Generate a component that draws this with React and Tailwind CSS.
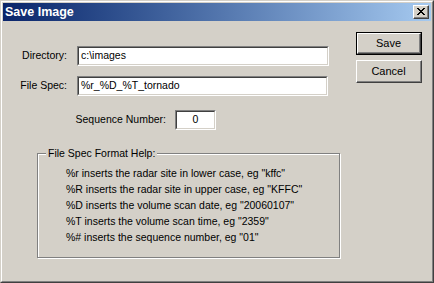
function Sunken({ className, children }) {
  return (
    <div className={'border-t border-l border-[#808080] border-r border-b border-r-white border-b-white ' + className}>
      <div className="h-full border-t border-l border-[#404040] border-r border-b border-r-[#d4d0c8] border-b-[#d4d0c8] bg-white flex items-center">
        {children}
      </div>
    </div>
  )
}

function Button({ label, isDefault }) {
  const btn = (
    <div className="h-full border-t border-l border-white border-r border-b border-r-[#404040] border-b-[#404040]">
      <div className="h-full border-r border-b border-[#808080] flex items-center justify-center text-[11px]">
        {label}
      </div>
    </div>
  )
  if (isDefault) {
    return <div className="w-[66px] h-[23px] border border-black">{btn}</div>
  }
  return <div className="w-[66px] h-[23px]">{btn}</div>
}

const help = [
  '%r inserts the radar site in lower case, eg "kffc"',
  '%R inserts the radar site in upper case, eg "KFFC"',
  '%D inserts the volume scan date, eg "20060107"',
  '%T inserts the volume scan time, eg "2359"',
  '%# inserts the sequence number, eg "01"',
]

export default function App() {
  return (
    <div className="w-[434px] h-[283px] font-['Liberation_Sans',sans-serif] text-[10.5px] text-black border-t border-l border-[#d4d0c8] border-r border-b border-r-[#404040] border-b-[#404040]">
      <div className="h-full border-t border-l border-white border-r border-b border-r-[#808080] border-b-[#808080] bg-[#d4d0c8] p-px flex flex-col">
        <div className="h-[18px] flex items-center justify-between bg-gradient-to-r from-[#0a246a] to-[#a6caf0]">
          <span className="pl-[2px] text-white font-bold text-[12.5px] leading-none">Save Image</span>
          <div className="w-[16px] h-[14px] mr-[2px] border-t border-l border-white border-r border-b border-r-[#404040] border-b-[#404040] bg-[#d4d0c8]">
            <div className="h-full border-r border-b border-[#808080] flex items-center justify-center">
              <svg width="8" height="7" viewBox="0 0 8 7" shapeRendering="crispEdges">
                <path d="M0 0h2v1h-2zM6 0h2v1h-2zM1 1h2v1h-2zM5 1h2v1h-2zM2 2h4v1h-4zM3 3h2v1h-2zM2 4h4v1h-4zM1 5h2v1h-2zM5 5h2v1h-2zM0 6h2v1h-2zM6 6h2v1h-2z" fill="#000" />
              </svg>
            </div>
          </div>
        </div>

        <div className="flex flex-1">
          <div className="w-[353px] pt-[25px]">
            <div className="flex items-center h-[20px]">
              <span className="w-[64px] text-right">Directory:</span>
              <Sunken className="ml-[10px] w-[252px] h-[20px]">
                <span className="pl-[2px]">c:\images</span>
              </Sunken>
            </div>
            <div className="flex items-center h-[20px] mt-[10px]">
              <span className="w-[64px] text-right">File Spec:</span>
              <Sunken className="ml-[10px] w-[251px] h-[20px]">
                <span className="pl-[2px]">%r_%D_%T_tornado</span>
              </Sunken>
            </div>
            <div className="flex items-center h-[20px] mt-[14px]">
              <span className="w-[163px] text-right">Sequence Number:</span>
              <Sunken className="ml-[9px] w-[41px] h-[20px]">
                <span className="w-full text-center">0</span>
              </Sunken>
            </div>

            <div className="relative ml-[34px] mt-[23px] w-[303px] h-[105px] border border-[#808080] shadow-[inset_1px_1px_0_#fff,1px_1px_0_#fff]">
              <span className="absolute left-[8px] top-[-7px] px-[2px] bg-[#d4d0c8] leading-[13px]">File Spec Format Help:</span>
              <div className="pt-[11px] pl-[28px]">
                {help.map(h => (
                  <div key={h} className="leading-[16px] whitespace-pre">{h}</div>
                ))}
              </div>
            </div>
          </div>

          <div className="pt-[11px] flex flex-col gap-[5px]">
            <Button label="Save" isDefault />
            <Button label="Cancel" />
          </div>
        </div>
      </div>
    </div>
  )
}
